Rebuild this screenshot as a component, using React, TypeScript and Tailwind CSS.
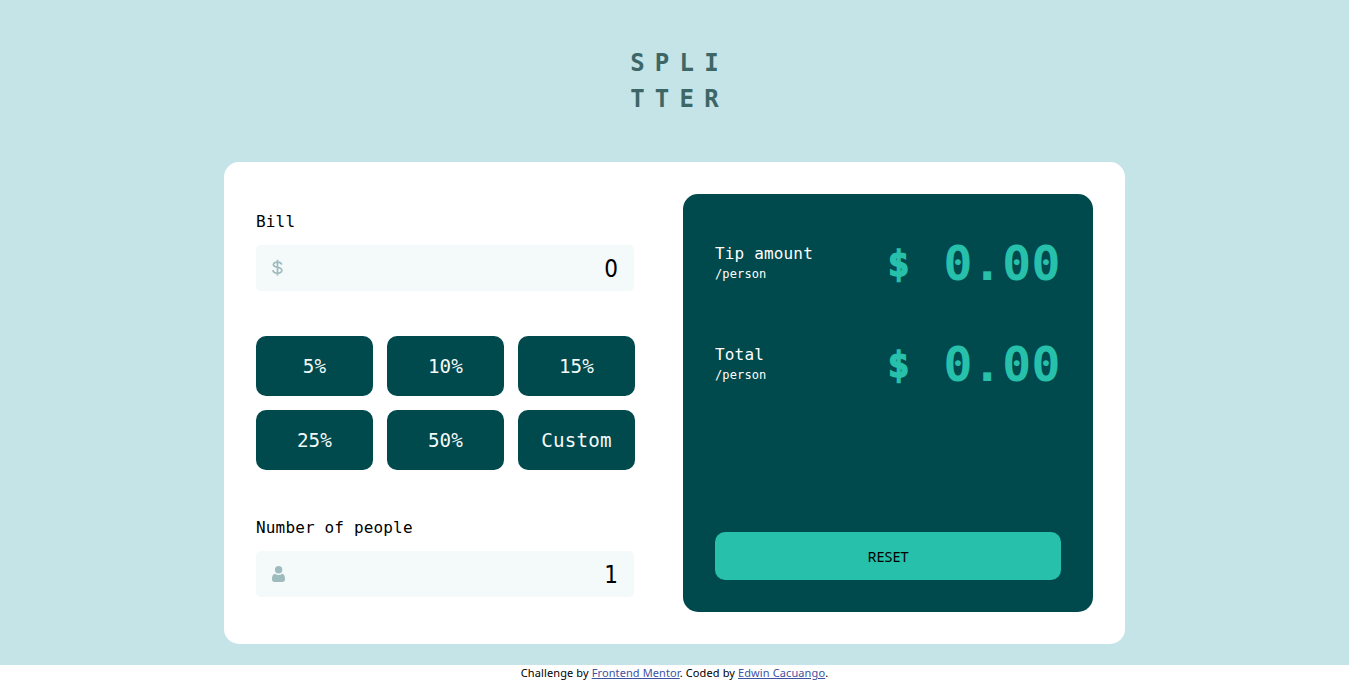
import { useState } from "react";

const TIPS = ["5%", "10%", "15%", "25%", "50%", "Custom"];

function DollarIcon() {
  return (
    <svg width="11" height="17" viewBox="0 0 11 17" className="shrink-0" aria-hidden="true">
      <path
        d="M9.600 5.700C9.400 3.900 7.900 3.100 5.500 3.100C3.100 3.100 1.400 3.900 1.400 5.700C1.400 9.300 9.800 7.200 9.800 11.200C9.800 13.200 8 14.100 5.500 14.100C2.800 14.100 1.100 13.100 1 11M5.500 0.700V16.400"
        fill="none"
        stroke="#9EBBBD"
        strokeWidth="1.7"
      />
    </svg>
  );
}

function PersonIcon() {
  return (
    <svg width="13" height="16" viewBox="0 0 13 16" className="shrink-0" aria-hidden="true">
      <g fill="#9EBBBD">
        <circle cx="6.6" cy="3.7" r="3.7" />
        <path d="M3 7.800C4 8.600 5.200 9 6.500 9S9.100 8.600 10.100 7.800C12 8.100 13 9.500 13 13.200C13 15 12.100 16 10.300 16H2.700C.9 16 0 15 0 13.200C0 9.500 1 8.100 3 7.800Z" />
      </g>
    </svg>
  );
}

type FieldProps = {
  label: string;
  icon: React.ReactNode;
  value: string;
  onChange: (value: string) => void;
};

function Field({ label, icon, value, onChange }: FieldProps) {
  return (
    <label className="block w-[378px]">
      <span className="block h-6 text-[16px] leading-6 tracking-[0.16px]">{label}</span>
      <span className="mt-[11px] flex h-[46px] items-center rounded-[5px] bg-[#f4fafa] px-4">
        <span className="mb-px flex">{icon}</span>
        <input
          value={value}
          onChange={(e) => onChange(e.target.value)}
          className="min-w-0 flex-1 bg-transparent pt-px text-right font-['DejaVu_Sans_Condensed','DejaVu_Sans',sans-serif] text-[24px] leading-[30px] outline-none [font-stretch:condensed]"
        />
      </span>
    </label>
  );
}

function Result({ title, amount }: { title: string; amount: string }) {
  return (
    <div className="flex h-[71px] items-center justify-between">
      <div className="pb-px text-white">
        <p className="text-[16px] leading-[22px] tracking-[0.16px]">{title}</p>
        <p className="text-[12px] leading-[18px] tracking-[0.12px]">/person</p>
      </div>
      <p className="flex items-center whitespace-pre font-bold text-[#26c0ab]">
        <span className="mr-[30px] text-[36px] leading-[71px] tracking-[4px] [-webkit-text-stroke:1.5px_#26c0ab]">$</span>
        <span className="text-[48px] leading-[71px] tracking-[0.48px]">{amount}</span>
      </p>
    </div>
  );
}

export default function App() {
  const [bill, setBill] = useState("0");
  const [people, setPeople] = useState("1");

  return (
    <div className="h-[680px] overflow-hidden bg-white font-['DejaVu_Sans_Mono',monospace] text-black">
      <main className="flex h-[665px] flex-col items-center bg-[#c5e4e7]">
        <h1 className="mt-[45px] h-[117px] pl-[10px] text-center text-[24px] leading-9 font-bold tracking-[10.2px] text-[#3d6666]">
          SPLI
          <br />
          TTER
        </h1>
        <section className="flex h-[482px] w-[901px] justify-between rounded-[15px] bg-white p-8">
          <div className="w-[379px] pt-4">
            <Field label="Bill" icon={<DollarIcon />} value={bill} onChange={setBill} />
            <div className="mt-[45px] mb-[46px] grid grid-cols-3 gap-[14px]">
              {TIPS.map((tip) => (
                <button
                  key={tip}
                  className="h-[60px] rounded-[10px] bg-[#00494d] pt-0.5 text-[19.2px] tracking-[0.19px] text-[#f4fafa]"
                >
                  {tip}
                </button>
              ))}
            </div>
            <Field label="Number of people" icon={<PersonIcon />} value={people} onChange={setPeople} />
          </div>
          <div className="flex h-[418px] w-[410px] flex-col rounded-[15px] bg-[#00494d] px-8 pt-[34px] pb-8">
            <Result title="Tip amount" amount="0.00" />
            <div className="h-[30px]" />
            <Result title="Total" amount="0.00" />
            <button className="mt-auto h-12 rounded-[10px] bg-[#26c0ab] pt-0.5 font-['Noto_Sans',sans-serif] text-[14.4px] text-black">
              RESET
            </button>
          </div>
        </section>
      </main>
      <footer className="text-center font-['Noto_Sans',sans-serif] text-[11px] leading-4 tracking-[0.11px]">
        Challenge by <a className="text-[#3e52a3] underline">Frontend Mentor</a>. Coded by{" "}
        <a className="text-[#3e52a3] underline">Edwin Cacuango</a>.
      </footer>
    </div>
  );
}
